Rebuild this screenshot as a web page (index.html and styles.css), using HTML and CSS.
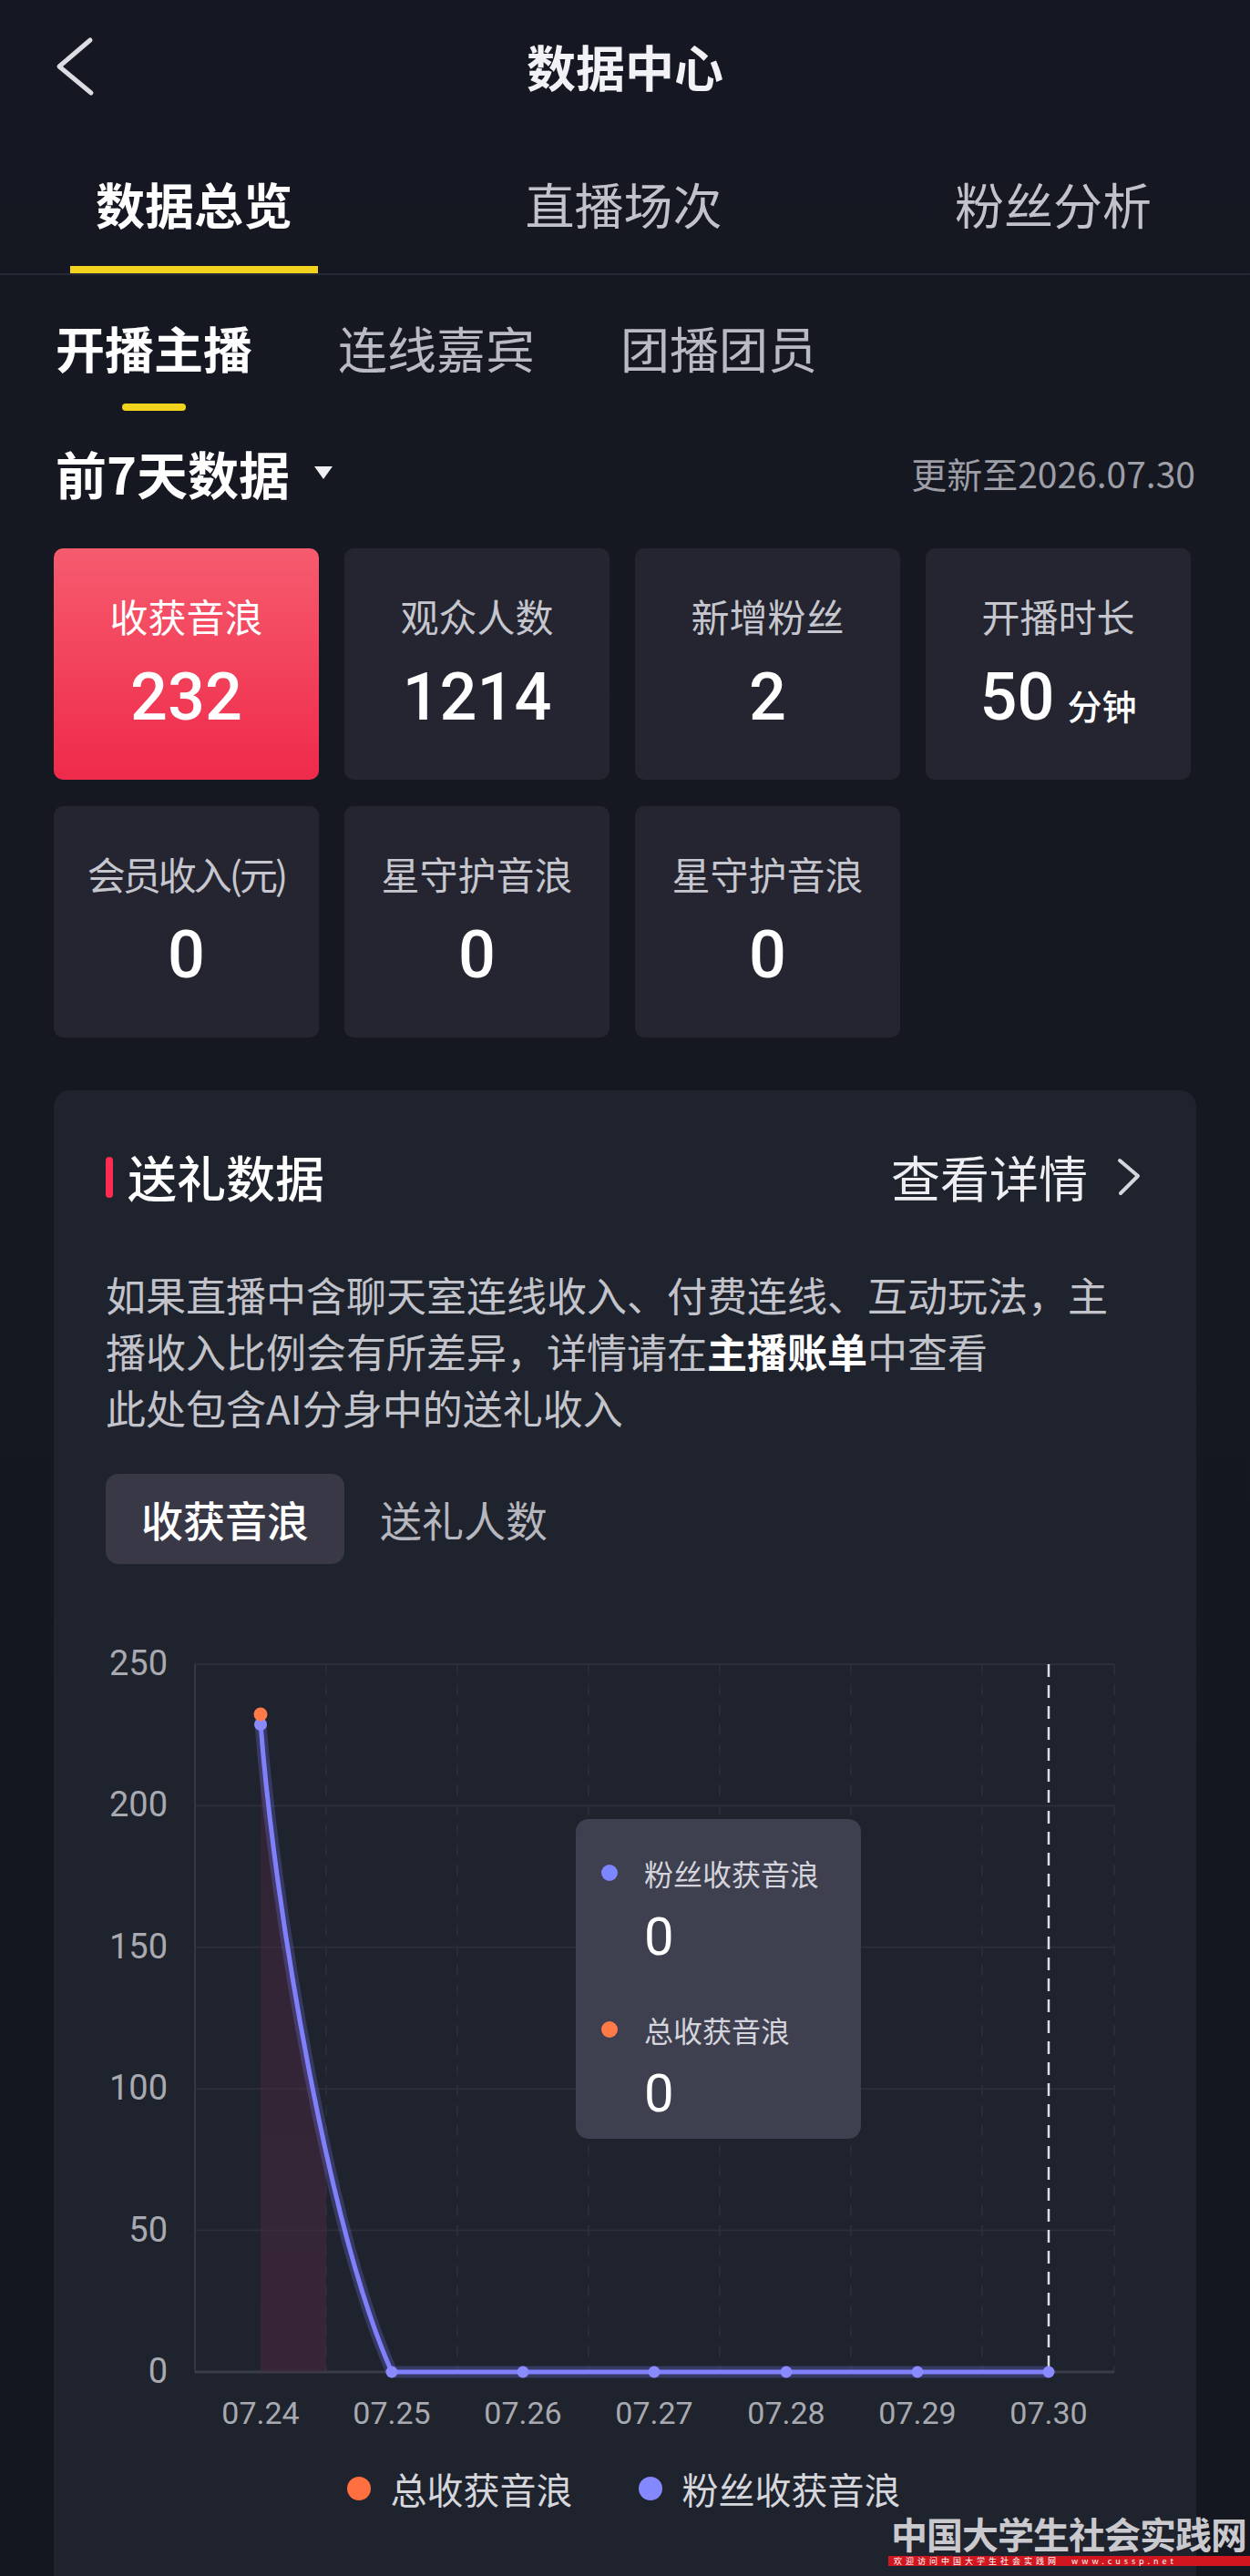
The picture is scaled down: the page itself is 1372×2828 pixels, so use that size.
FILE: index.html
```html
<!DOCTYPE html>
<html lang="zh-CN">
<head>
    <meta charset="UTF-8">
    <meta name="viewport" content="width=device-width, initial-scale=1.0">
    <title>数据中心</title>
    <link rel="stylesheet" href="styles.css">
</head>
<body>
<div class="page">
    <header class="topbar">
        <svg class="back" width="44" height="66" viewBox="0 0 44 66">
            <path d="M39 4 L5 33 L40 62" fill="none" stroke="#dcdce2" stroke-width="5" stroke-linecap="round" stroke-linejoin="round"/>
        </svg>
        <h1 class="title">数据中心</h1>
        <div></div>
    </header>

    <nav class="main-tabs">
        <div class="main-tab active">数据总览</div>
        <div class="main-tab">直播场次</div>
        <div class="main-tab">粉丝分析</div>
    </nav>

    <nav class="sub-tabs">
        <div class="sub-tab active">开播主播</div>
        <div class="sub-tab">连线嘉宾</div>
        <div class="sub-tab">团播团员</div>
    </nav>

    <div class="range-row">
        <div class="range">前7天数据<span class="caret"></span></div>
        <div class="updated">更新至2026.07.30</div>
    </div>

    <!-- stat cards -->
    <div class="stats">
        <div class="stat highlight">
            <div class="stat-label">收获音浪</div>
            <div class="stat-value">232</div>
        </div>
        <div class="stat">
            <div class="stat-label">观众人数</div>
            <div class="stat-value">1214</div>
        </div>
        <div class="stat">
            <div class="stat-label">新增粉丝</div>
            <div class="stat-value">2</div>
        </div>
        <div class="stat">
            <div class="stat-label">开播时长</div>
            <div class="stat-value">50<span class="unit">分钟</span></div>
        </div>
        <div class="stat">
            <div class="stat-label tight">会员收入(元)</div>
            <div class="stat-value">0</div>
        </div>
        <div class="stat">
            <div class="stat-label">星守护音浪</div>
            <div class="stat-value">0</div>
        </div>
        <div class="stat">
            <div class="stat-label">星守护音浪</div>
            <div class="stat-value">0</div>
        </div>
    </div>

    <!-- gift panel -->
    <section class="panel">
        <div class="panel-head">
            <div class="panel-title">送礼数据</div>
            <div class="more">查看详情
                <svg width="28" height="44" viewBox="0 0 28 44">
                    <path d="M4 4 L24 21 L5 40" fill="none" stroke="#d6d7dd" stroke-width="4" stroke-linecap="round" stroke-linejoin="round"/>
                </svg>
            </div>
        </div>
        <p class="note">如果直播中含聊天室连线收入、付费连线、互动玩法，主播收入比例会有所差异，详情请在<b>主播账单</b>中查看<br>此处包含AI分身中的送礼收入</p>

        <div class="seg">
            <span class="seg-item active">收获音浪</span>
            <span class="seg-item">送礼人数</span>
        </div>

        <div class="chart">
            <svg width="1137" height="930" viewBox="116 1760 1137 930">
                <defs>
                    <linearGradient id="area" x1="0" y1="0" x2="0" y2="1">
                        <stop offset="0" stop-color="#4e2740" stop-opacity="0.35"/>
                        <stop offset="1" stop-color="#4a2842" stop-opacity="0.55"/>
                    </linearGradient>
                    <clipPath id="band">
                        <rect x="286" y="1826" width="72" height="777"/>
                    </clipPath>
                </defs>
                <g stroke="#2c2e3b" stroke-width="2">
                    <line x1="214" y1="1826" x2="1223" y2="1826"/>
                    <line x1="214" y1="1981.4" x2="1223" y2="1981.4"/>
                    <line x1="214" y1="2136.8" x2="1223" y2="2136.8"/>
                    <line x1="214" y1="2292.2" x2="1223" y2="2292.2"/>
                    <line x1="214" y1="2447.6" x2="1223" y2="2447.6"/>
                </g>
                <g stroke="#2a2c39" stroke-width="2" stroke-dasharray="12 10">
                    <line x1="358" y1="1826" x2="358" y2="2603"/>
                    <line x1="502" y1="1826" x2="502" y2="2603"/>
                    <line x1="646" y1="1826" x2="646" y2="2603"/>
                    <line x1="790" y1="1826" x2="790" y2="2603"/>
                    <line x1="934" y1="1826" x2="934" y2="2603"/>
                    <line x1="1078" y1="1826" x2="1078" y2="2603"/>
                    <line x1="1223" y1="1826" x2="1223" y2="2603"/>
                </g>
                <line x1="214" y1="1826" x2="214" y2="2603" stroke="#34364a" stroke-width="2"/>
                <line x1="214" y1="2603" x2="1223" y2="2603" stroke="#3a3c4a" stroke-width="3"/>

                <g class="ylab" text-anchor="end">
                    <text x="184" y="1828">250</text>
                    <text x="184" y="1983">200</text>
                    <text x="184" y="2139">150</text>
                    <text x="184" y="2294">100</text>
                    <text x="184" y="2450">50</text>
                    <text x="184" y="2605">0</text>
                </g>
                <g class="xlab" text-anchor="middle">
                    <text x="286" y="2651">07.24</text>
                    <text x="430" y="2651">07.25</text>
                    <text x="574" y="2651">07.26</text>
                    <text x="718" y="2651">07.27</text>
                    <text x="863" y="2651">07.28</text>
                    <text x="1007" y="2651">07.29</text>
                    <text x="1151" y="2651">07.30</text>
                </g>

                <path d="M286 1882 C302 2100 362 2450 430 2603 L286 2603 Z" fill="url(#area)" clip-path="url(#band)"/>
                <line x1="1151" y1="1826" x2="1151" y2="2603" stroke="#dedee6" stroke-width="2.5" stroke-dasharray="14 9"/>

                <path d="M286 1891 C302 2100 362 2450 430 2603 L1151 2603" fill="none" stroke="#7b7bff" stroke-opacity="0.25" stroke-width="13" stroke-linejoin="round"/>
                <path d="M286 1891 C302 2100 362 2450 430 2603 L1151 2603" fill="none" stroke="#8080fb" stroke-width="5" stroke-linejoin="round"/>
                <g fill="#8a8aff">
                    <circle cx="430" cy="2603" r="6.5"/>
                    <circle cx="574" cy="2603" r="6.5"/>
                    <circle cx="718" cy="2603" r="6.5"/>
                    <circle cx="863" cy="2603" r="6.5"/>
                    <circle cx="1007" cy="2603" r="6.5"/>
                    <circle cx="1151" cy="2603" r="6.5"/>
                    <circle cx="286" cy="1892" r="7"/>
                </g>
                <circle cx="286" cy="1881" r="7.5" fill="#ff7a48"/>
            </svg>

            <div class="tip">
                <span class="dot blue"></span>
                <span class="tip-label">粉丝收获音浪</span>
                <span class="tip-value first">0</span>
                <span class="dot orange"></span>
                <span class="tip-label">总收获音浪</span>
                <span class="tip-value">0</span>
            </div>
        </div>

        <div class="legend">
            <div class="legend-item"><span class="legend-dot orange"></span>总收获音浪</div>
            <div class="legend-item"><span class="legend-dot blue"></span>粉丝收获音浪</div>
        </div>
    </section>

    <div class="watermark">
        <div class="wm-name">中国大学生社会实践网</div>
        <div class="wm-strip">欢迎访问中国大学生社会实践网　www.cussp.net</div>
    </div>
</div>
</body>
</html>
```

FILE: styles.css
```css
/* Global */
body {
    margin: 0;
    padding: 0;
    background-color: #141620;
    color: #fff;
    font-family: "Noto Sans CJK SC", "Noto Sans", sans-serif;
}

.page {
    position: relative;
    width: 1372px;
    height: 2828px;
    overflow: hidden;
    background: linear-gradient(180deg, #151722 0%, #161821 40%, #141620 100%);
}

/* Top bar */
.topbar {
    height: 146px;
    display: grid;
    grid-template-columns: 1fr auto 1fr;
    align-items: center;
}

.back {
    display: block;
    margin-left: 60px;
}

.title {
    margin: 0;
    font-size: 54px;
    line-height: 60px;
    font-weight: 700;
    color: #f2f2f6;
}

/* Main tabs */
.main-tabs {
    display: flex;
    justify-content: space-between;
    padding: 48px 80px 0 77px;
    border-bottom: 2px solid #262835;
}

.main-tab {
    font-size: 54px;
    line-height: 60px;
    padding: 0 28px 38px;
    color: #c2c3ca;
    border-bottom: 8px solid transparent;
}

.main-tab.active {
    color: #fff;
    font-weight: 700;
    border-bottom-color: #f2d41e;
}

/* Sub tabs */
.sub-tabs {
    display: flex;
    gap: 94px;
    margin-top: 50px;
    padding-left: 61px;
}

.sub-tab {
    font-size: 54px;
    line-height: 60px;
    color: #b9bac2;
}

.sub-tab.active {
    color: #fff;
    font-weight: 700;
}

.sub-tab.active::after {
    content: "";
    display: block;
    width: 70px;
    height: 8px;
    margin: 31px auto 0;
    border-radius: 4px;
    background-color: #f2d41e;
}

/* Range row */
.range-row {
    display: flex;
    justify-content: space-between;
    align-items: center;
    margin-top: 38px;
    padding: 0 60px 0 61px;
}

.range {
    display: flex;
    align-items: center;
    font-size: 56px;
    line-height: 60px;
    font-weight: 700;
}

.caret {
    width: 0;
    height: 0;
    margin-left: 27px;
    border-left: 10px solid transparent;
    border-right: 10px solid transparent;
    border-top: 14px solid #f0f0f4;
}

.updated {
    font-size: 39px;
    line-height: 44px;
    color: #9d9ea6;
}

/* Stat cards */
.stats {
    display: grid;
    grid-template-columns: repeat(4, 291px);
    gap: 29px 28px;
    margin-top: 53px;
    padding-left: 59px;
}

.stat {
    height: 254px;
    box-sizing: border-box;
    padding-top: 49px;
    border-radius: 10px;
    background-color: #242530;
    text-align: center;
}

.stat.highlight {
    background: linear-gradient(180deg, #f65b6e 0%, #f2405a 55%, #ef2a4b 100%);
}

.stat-label {
    font-size: 42px;
    line-height: 50px;
    color: #c6c7ce;
}

.stat-label.tight {
    letter-spacing: -3px;
}

.highlight .stat-label {
    color: #fff;
}

.stat-value {
    margin-top: 25px;
    font-family: Roboto, "Noto Sans CJK SC", sans-serif;
    font-size: 72px;
    line-height: 80px;
    font-weight: 500;
    color: #fff;
}

.unit {
    margin-left: 14px;
    font-family: "Noto Sans CJK SC", sans-serif;
    font-size: 38px;
    font-weight: 500;
}

/* Gift panel */
.panel {
    margin: 58px 59px 0;
    padding: 63px 60px 90px 57px;
    border-radius: 18px 18px 0 0;
    background-color: #1f232d;
}

.panel-head {
    display: flex;
    justify-content: space-between;
    align-items: center;
    height: 64px;
}

.panel-title {
    display: flex;
    align-items: center;
    gap: 16px;
    font-size: 54px;
    line-height: 64px;
    font-weight: 500;
}

.panel-title::before {
    content: "";
    width: 8px;
    height: 45px;
    border-radius: 4px;
    background-color: #fe2c55;
}

.more {
    display: flex;
    align-items: center;
    gap: 31px;
    font-size: 54px;
    line-height: 64px;
    color: #eeeef2;
}

.more svg {
    display: block;
}

.note {
    margin: 66px 0 0;
    font-size: 44px;
    line-height: 62px;
    color: #c3c4cb;
}

.note b {
    color: #fff;
    font-weight: 700;
}

/* Segment */
.seg {
    display: flex;
    margin-top: 42px;
}

.seg-item {
    padding: 0 39px;
    font-size: 46px;
    line-height: 99px;
    border-radius: 14px;
    color: #b5b6be;
}

.seg-item.active {
    background-color: #393846;
    color: #fff;
    font-weight: 500;
}

/* Chart */
.chart {
    position: relative;
    margin-top: 44px;
}

.chart svg {
    display: block;
}

.ylab text {
    font-family: Roboto, sans-serif;
    font-size: 38px;
    fill: #a9aab1;
    dominant-baseline: middle;
}

.xlab text {
    font-family: Roboto, sans-serif;
    font-size: 34px;
    fill: #a9aab1;
    dominant-baseline: middle;
}

/* tooltip over the chart */
.tip {
    position: absolute;
    left: 516px;
    top: 236px;
    width: 313px;
    height: 351px;
    box-sizing: border-box;
    padding: 39px 0 0 28px;
    border-radius: 14px;
    background-color: rgba(64, 65, 81, 0.95);
    display: grid;
    grid-template-columns: 18px 1fr;
    column-gap: 29px;
    align-items: center;
    align-content: start;
}

.dot {
    width: 18px;
    height: 18px;
    border-radius: 50%;
}

.dot.blue {
    background-color: #7b86ff;
}

.dot.orange {
    background-color: #ff7a48;
}

.tip-label {
    font-size: 32px;
    line-height: 40px;
    color: #d4d5dc;
}

.tip-value {
    grid-column: 2;
    margin-top: 15px;
    font-family: Roboto, sans-serif;
    font-size: 58px;
    line-height: 70px;
    color: #fff;
}

.tip-value.first {
    margin-bottom: 47px;
}

/* Legend */
.legend {
    display: flex;
    justify-content: center;
    gap: 72px;
    margin-top: 16px;
}

.legend-item {
    display: flex;
    align-items: center;
    gap: 22px;
    font-size: 40px;
    line-height: 50px;
    color: #d6d7dd;
}

.legend-dot {
    width: 26px;
    height: 26px;
    border-radius: 50%;
}

.legend-dot.orange {
    background-color: #ff6f3f;
}

.legend-dot.blue {
    background-color: #8388ff;
}

/* Site watermark */
.watermark {
    position: absolute;
    left: 975px;
    top: 2756px;
    width: 397px;
    overflow: hidden;
    white-space: nowrap;
}

.wm-name {
    padding-left: 3px;
    font-size: 40px;
    line-height: 50px;
    font-weight: 700;
    letter-spacing: -1px;
    color: #c9c9ce;
}

.wm-strip {
    height: 11px;
    padding-left: 6px;
    font-size: 9px;
    line-height: 11px;
    letter-spacing: 4px;
    color: #fff;
    background-color: #d0161e;
}
```
